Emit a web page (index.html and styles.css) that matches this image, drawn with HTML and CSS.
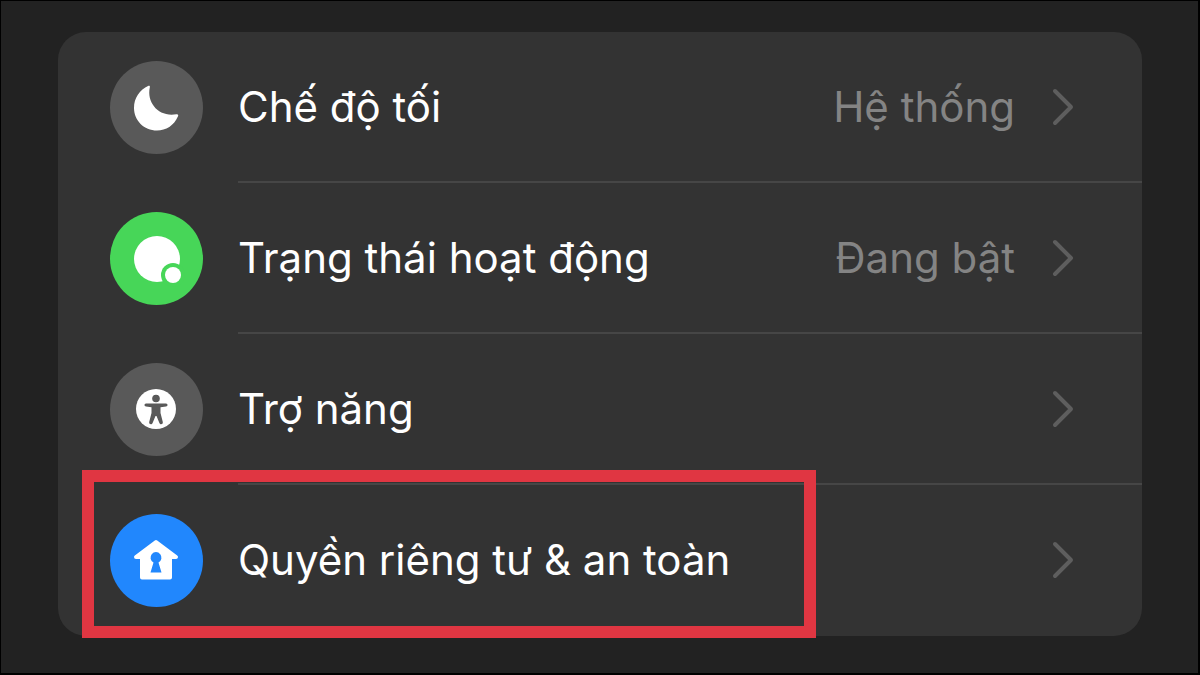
FILE: index.html
```html
<!DOCTYPE html>
<html lang="vi">
<head>
    <meta charset="UTF-8">
    <meta name="viewport" content="width=device-width, initial-scale=1.0">
    <title>Cài đặt</title>
    <link rel="stylesheet" href="styles.css">
</head>
<body>
    <main class="page">
        <ul class="settings">
            <!-- Chế độ tối -->
            <li class="item">
                <button type="button" class="row">
                    <svg class="icon icon-gray" viewBox="0 0 93 93" aria-hidden="true">
                        <path fill="#fff" d="M38.500 24.800C39.500 24.400 40.200 25 39.800 26.500C36.500 42 49 56.500 66.500 53.200C68 53 68.600 53.800 68 55.200C64 64.500 56 69.500 47 69.500C34 69.500 24 59.500 24 47C24 37 29.500 29 38.500 24.800Z"/>
                    </svg>
                    <span class="content">
                        <span class="label">Chế độ tối</span>
                        <span class="value">Hệ thống</span>
                        <svg class="chevron" viewBox="0 0 24 40" aria-hidden="true"><path d="M4 4L20 20L4 36"/></svg>
                    </span>
                </button>
            </li>

            <!-- Trạng thái hoạt động -->
            <li class="item">
                <button type="button" class="row">
                    <svg class="icon icon-green" viewBox="0 0 93 93" aria-hidden="true">
                        <circle cx="47" cy="47" r="23" fill="#fff"/>
                        <circle cx="63" cy="63" r="12" fill="#47d658"/>
                        <circle cx="63" cy="63" r="8" fill="#fff"/>
                    </svg>
                    <span class="content">
                        <span class="label">Trạng thái hoạt động</span>
                        <span class="value">Đang bật</span>
                        <svg class="chevron" viewBox="0 0 24 40" aria-hidden="true"><path d="M4 4L20 20L4 36"/></svg>
                    </span>
                </button>
            </li>

            <!-- Trợ năng -->
            <li class="item">
                <button type="button" class="row">
                    <svg class="icon icon-gray" viewBox="0 0 93 93" aria-hidden="true">
                        <circle cx="46" cy="46" r="20" fill="#fff"/>
                        <circle cx="46" cy="35.500" r="3.800" fill="#595959"/>
                        <path fill="#595959" d="M36 40.500H56C58 40.500 58 43.500 56 43.500L50.500 44.300V50L52.800 59C53.200 61.500 50.200 62 49.400 60L46.500 53H45.500L42.600 60C41.800 62 38.800 61.500 39.200 59L41.500 50V44.300L36 43.500C34 43.500 34 40.500 36 40.500Z"/>
                    </svg>
                    <span class="content">
                        <span class="label">Trợ năng</span>
                        <svg class="chevron" viewBox="0 0 24 40" aria-hidden="true"><path d="M4 4L20 20L4 36"/></svg>
                    </span>
                </button>
            </li>

            <!-- Quyền riêng tư & an toàn -->
            <li class="item highlighted">
                <button type="button" class="row">
                    <svg class="icon icon-blue" viewBox="0 0 93 93" aria-hidden="true">
                        <path fill="#fff" stroke="#fff" stroke-width="4" stroke-linejoin="round" d="M46 28L66 43H60V63.500H32V43H26Z"/>
                        <path fill="#2187fd" d="M40.500 58.500L43.500 48.500A5.500 5.500 0 1 1 48.500 48.500L51.500 58.500Z"/>
                    </svg>
                    <span class="content">
                        <span class="label">Quyền riêng tư &amp; an toàn</span>
                        <svg class="chevron" viewBox="0 0 24 40" aria-hidden="true"><path d="M4 4L20 20L4 36"/></svg>
                    </span>
                </button>
            </li>
        </ul>
    </main>
</body>
</html>
```

FILE: styles.css
```css
*, *::after {
    box-sizing: border-box;
}
body {
    margin: 0;
    background-color: #222;
    color: #fff;
    font-family: Inter, "Liberation Sans", sans-serif;
}
.page {
    min-height: 100vh;
    padding: 31px 56px 35px 57px;
    border: 1px solid #000;
    border-width: 1px 2px 2px 1px;
}
.settings {
    margin: 0;
    padding: 0;
    list-style: none;
    background-color: #333;
    border-radius: 28px;
}
.item {
    position: relative;
}
.row {
    display: flex;
    align-items: center;
    gap: 35px;
    width: 100%;
    padding: 0 0 0 52px;
    border: none;
    background: none;
    color: inherit;
    font-family: inherit;
    font-size: 42px;
    line-height: 56px;
    text-align: left;
    cursor: pointer;
}
.icon {
    flex: none;
    width: 93px;
    height: 93px;
    border-radius: 50%;
}
.icon-gray {
    background-color: #595959;
}
.icon-green {
    background-color: #47d658;
}
.icon-blue {
    background-color: #2187fd;
}
.content {
    flex: 1;
    display: flex;
    align-items: center;
    height: 151px;
    padding-right: 67px;
    border-bottom: 2px solid #464646;
}
.item:last-child .content {
    border-bottom-color: transparent;
}
.label {
    flex: 1;
}
.value {
    color: #848484;
}
.chevron {
    flex: none;
    width: 24px;
    height: 40px;
    margin-left: 36px;
    fill: none;
    stroke: #5e5e5e;
    stroke-width: 4;
    stroke-linecap: round;
    stroke-linejoin: round;
}
/* khung đỏ quanh mục đang được chỉ dẫn */
.highlighted::after {
    content: "";
    position: absolute;
    top: -15px;
    left: 24px;
    width: 734px;
    height: 168px;
    border: 12px solid #e03642;
    pointer-events: none;
}
```
